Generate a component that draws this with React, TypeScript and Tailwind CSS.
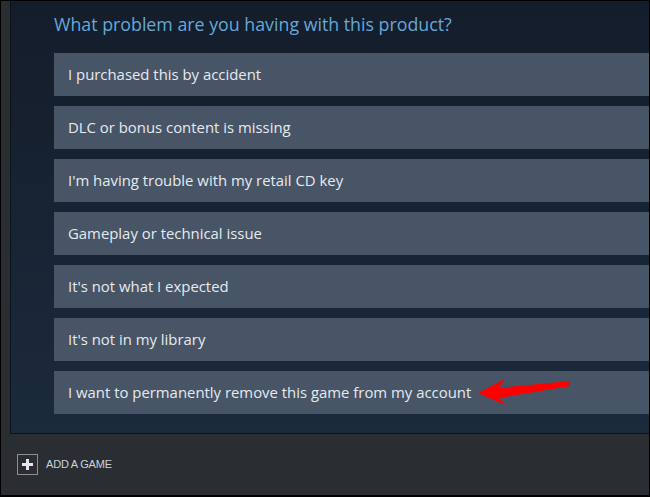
const reasons = [
  "I purchased this by accident",
  "DLC or bonus content is missing",
  "I'm having trouble with my retail CD key",
  "Gameplay or technical issue",
  "It's not what I expected",
  "It's not in my library",
  "I want to permanently remove this game from my account",
];

export default function App() {
  return (
    <div className="w-[650px] h-[497px] bg-black pt-px pl-px pr-px pb-[2px] overflow-hidden font-['Open_Sans',Arial,sans-serif]">
      <div className="w-full h-full bg-[#2a2d32] flex flex-col pl-[9px]">
        <div className="h-[433px] shrink-0 bg-gradient-to-b from-[#141d2b] to-[#1b2a3c] border-l border-b border-[#0e131a] pl-[43px] overflow-hidden">
          <h2 className="text-[17.8px] text-[#66a8d6] leading-none pt-[15px] h-[52px]">
            What problem are you having with this product?
          </h2>
          <div className="flex flex-col gap-[10px]">
            {reasons.map((r, i) => (
              <div
                key={r}
                className="relative h-[43px] w-[640px] bg-[#475567] text-[14.9px] text-[#e6eaee] flex items-center pl-[14px]"
              >
                {r}
                {i === reasons.length - 1 && (
                  <svg
                    className="absolute left-[424px] top-[8px]"
                    width="96"
                    height="26"
                    viewBox="0 0 96 26"
                  >
                    <polygon
                      points="0,14 27,0 21,9 92,2 92,7 21,19 27,26"
                      fill="#ff0000"
                    />
                  </svg>
                )}
              </div>
            ))}
          </div>
        </div>
        <div className="flex items-center gap-2 pl-[7px] pt-[20px] font-['Liberation_Sans',Arial,sans-serif]">
          <div className="w-[21px] h-[21px] border border-[#8b9097] flex items-center justify-center">
            <svg width="11" height="11" viewBox="0 0 11 11">
              <rect x="4" y="0" width="3" height="11" fill="#e8e8e8" />
              <rect x="0" y="4" width="11" height="3" fill="#e8e8e8" />
            </svg>
          </div>
          <span className="text-[11px] text-[#c9d3dc] tracking-[-0.2px]">ADD A GAME</span>
        </div>
      </div>
    </div>
  );
}
